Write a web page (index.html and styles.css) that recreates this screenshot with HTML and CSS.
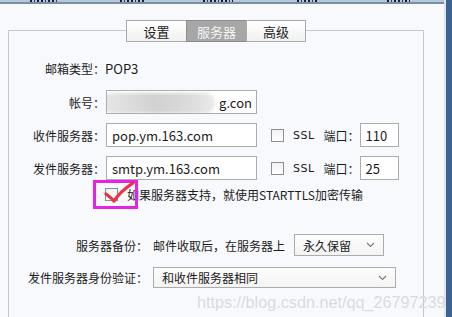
FILE: index.html
```html
<!DOCTYPE html>
<html lang="zh">
<head>
<meta charset="utf-8">
<link rel="stylesheet" href="styles.css">
</head>
<body>
<div class="main">
  <div class="topbar">
    <span class="tb-item tb-1"></span>
    <span class="tb-item tb-2"></span>
    <span class="tb-item tb-3"></span>
    <span class="tb-item tb-4"></span>
    <span class="tb-item tb-5"></span>
  </div>
  <div class="panel">
    <div class="box">
      <div class="tabs">
        <div class="tab">设置</div>
        <div class="tab tab-on">服务器</div>
        <div class="tab tab-last">高级</div>
      </div>

      <div class="row row-type">
        <div class="lbl">邮箱类型：</div>
        <div class="val">POP3</div>
      </div>

      <div class="row row-in">
        <div class="lbl">帐号：</div>
        <div class="input input-acct"><span class="blur"></span><span class="acct-text">g.con</span></div>
      </div>

      <div class="row row-in">
        <div class="lbl">收件服务器：</div>
        <div class="input input-host">pop.ym.163.com</div>
        <span class="cb cb-ssl"></span>
        <span class="ssl">SSL</span>
        <span class="port-lbl">端口：</span>
        <div class="input input-port">110</div>
      </div>

      <div class="row row-in">
        <div class="lbl">发件服务器：</div>
        <div class="input input-host">smtp.ym.163.com</div>
        <span class="cb cb-ssl"></span>
        <span class="ssl">SSL</span>
        <span class="port-lbl">端口：</span>
        <div class="input input-port">25</div>
      </div>

      <div class="row row-tls">
        <span class="cb cb-tls"></span>
        <span class="tls-text">如果服务器支持，就使用STARTTLS加密传输</span>
        <span class="mark-box"></span>
        <svg class="mark-check" width="34" height="26" viewBox="0 0 34 26"><path d="M2 12 C5 14 8 17 10 19 C14 13 20 7 29 1" fill="none" stroke="#ea3340" stroke-width="3.2" stroke-linecap="round" stroke-linejoin="round"/></svg>
      </div>

      <div class="row row-backup">
        <div class="lbl2">服务器备份：</div>
        <span class="txt">邮件收取后，在服务器上</span>
        <div class="select select-keep"><span>永久保留</span><svg class="chev" width="9" height="6" viewBox="0 0 9 6"><path d="M1 1 L4.5 4.5 L8 1" fill="none" stroke="#7a7a7a" stroke-width="1.1"/></svg></div>
      </div>

      <div class="row row-auth">
        <div class="lbl2">发件服务器身份验证：</div>
        <div class="select select-auth"><span>和收件服务器相同</span><svg class="chev" width="9" height="6" viewBox="0 0 9 6"><path d="M1 1 L4.5 4.5 L8 1" fill="none" stroke="#7a7a7a" stroke-width="1.1"/></svg></div>
      </div>
    </div>
  </div>
</div>
<div class="sidebar"></div>
<div class="watermark">https://blog.csdn.net/qq_26797239</div>
</body>
</html>
```

FILE: styles.css
```css
* { box-sizing: border-box; }
html, body { margin: 0; padding: 0; }
body {
  width: 452px;
  height: 317px;
  overflow: hidden;
  display: flex;
  position: relative;
  background: #f8f9fd;
  font-family: "Noto Sans CJK SC", "Noto Sans", sans-serif;
  font-size: 12px;
  color: #1b1b1b;
}
.main { flex: 1; display: flex; flex-direction: column; min-width: 0; }
.topbar {
  height: 11px;
  background: #b4c9df;
  border-bottom: 2px solid #7c8ea2;
  display: flex;
  align-items: flex-start;
}
.tb-item {
  height: 2px;
  background: repeating-linear-gradient(90deg, #1d1d2a 0 2px, transparent 2px 4px, #243a78 4px 5px, transparent 5px 7px, #1d1d2a 7px 9px, transparent 9px 11px);
}
.tb-1 { margin-left: 30px; width: 28px; }
.tb-2 { margin-left: 62px; width: 25px; }
.tb-3 { margin-left: 58px; width: 30px; }
.tb-4 { margin-left: 64px; width: 21px; }
.tb-5 { margin-left: 69px; width: 23px; }
.sidebar {
  width: 8px;
  border-left: 2px solid #dfe4ec;
  background: #3d6490;
}
.panel { padding: 26px 20px 0 8px; flex: 1; }
.box {
  border: 1px solid #c6c6c6;
  border-bottom: none;
  height: 300px;
}
.tabs {
  display: flex;
  justify-content: center;
  margin-top: -11px;
  height: 22px;
}
.tab {
  width: 60px;
  height: 22px;
  border: 1px solid #a9a9a9;
  border-right: none;
  background: linear-gradient(#ffffff, #f1f1f1);
  display: flex;
  align-items: center;
  justify-content: center;
  font-size: 13px;
  color: #222;
}
.tab-last { border-right: 1px solid #a9a9a9; }
.tab-on {
  background: #a7a7a7;
  border-color: #8d8d8d;
  color: #f4f4f4;
}
.row { display: flex; align-items: center; }
.lbl { width: 96px; text-align: right; flex: none; }
.lbl2 { width: 139px; text-align: right; flex: none; }
.row-type { height: 24px; margin-top: 14px; }
.val { font-size: 13px; }
.row-in { height: 24px; margin-top: 9px; }
.row-type + .row-in { margin-top: 10px; }
.input {
  height: 24px;
  background: #fff;
  border: 1px solid #acacac;
  font-size: 13px;
  display: flex;
  align-items: center;
  padding-left: 5px;
  margin-left: 1px;
  overflow: hidden;
  white-space: nowrap;
}
.input-acct, .input-host { width: 151px; }
.input-acct { position: relative; justify-content: flex-end; padding-right: 4px; }
.blur {
  position: absolute;
  left: -4px;
  top: 2px;
  width: 112px;
  height: 20px;
  border-radius: 9px;
  background: linear-gradient(90deg, #e6e6e6 0%, #dcdcdc 25%, #d2d2d2 45%, #d6d6d6 65%, #e0e0e0 85%, #ececec 100%);
  filter: blur(1.5px);
}
.input-port { width: 39px; margin-left: 0; }
.cb {
  width: 13px;
  height: 13px;
  border: 1px solid #8e8e8e;
  background: linear-gradient(#f1f1f1, #ffffff);
  flex: none;
}
.cb-ssl { margin-left: 14px; }
.ssl { margin-left: 9px; font-family: "DejaVu Sans", sans-serif; font-size: 11px; letter-spacing: 0.5px; }
.port-lbl { margin-left: 9px; }
.row-tls { height: 22px; margin-top: 3px; position: relative; }
.cb-tls { margin-left: 96px; }
.tls-text { margin-left: 9px; }
.mark-box {
  position: absolute;
  left: 84px;
  top: -3px;
  width: 45px;
  height: 29px;
  border: 3px solid #e522e5;
}
.mark-check { position: absolute; left: 95px; top: -1px; }
.row-backup { height: 22px; margin-top: 29px; }
.txt { margin-left: 5px; }
.select {
  height: 22px;
  border: 1px solid #acacac;
  background: linear-gradient(#fdfdfd, #f3f3f3);
  display: flex;
  align-items: center;
  justify-content: space-between;
  padding: 0 8px;
  font-size: 12px;
}
.select-keep { width: 90px; margin-left: 9px; }
.select-auth { width: 243px; margin-left: 5px; height: 21px; }
.row-auth { height: 21px; margin-top: 11px; }
.watermark {
  position: absolute;
  left: 197px;
  top: 293px;
  font-family: "Liberation Sans", Arial, sans-serif;
  font-size: 16.2px;
  color: #dadbe0;
  white-space: nowrap;
}
```
